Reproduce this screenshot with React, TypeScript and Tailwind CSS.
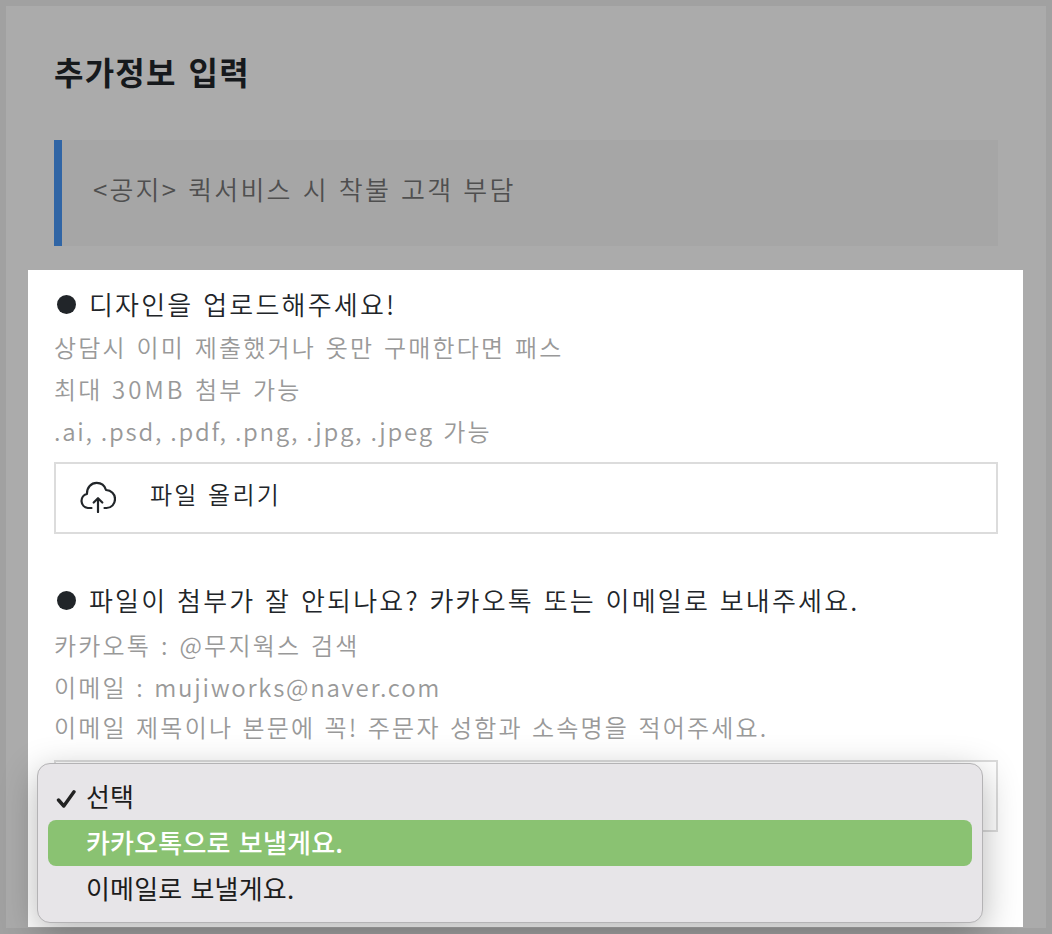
const LATIN = 'tracking-[1.75px] [word-spacing:0px]'

function FieldLabel({ children }: { children: string }) {
  return (
    <h2 className="flex h-11 items-center text-[26px] leading-[44px] font-[350] tracking-[2.2px] whitespace-nowrap text-[#212529] [word-spacing:1.7px]">
      <span className="-mt-[3px] mr-[13px] ml-[3px] size-[19px] shrink-0 rounded-full bg-[#212529]" />
      <span className="-mt-[5px]">{children}</span>
    </h2>
  )
}

function UploadHints() {
  return (
    <div className="-mt-0.5 text-2xl leading-[42px] font-[350] tracking-[2.2px] whitespace-nowrap text-[#999]">
      <p className="h-[42px] leading-[42px] [word-spacing:2.1px]">상담시 이미 제출했거나 옷만 구매한다면 패스</p>
      <p className="h-[42px] leading-[42px] [word-spacing:1.8px]">
        최대 <span className="tracking-[3.1px]">30MB</span> 첨부 가능
      </p>
      <p className="h-[42px] leading-[42px] [word-spacing:1.8px]">
        <span className={LATIN}>.ai, .psd, .pdf, .png, .jpg, .jpeg</span> 가능
      </p>
    </div>
  )
}

function ContactHints() {
  return (
    <div className="text-2xl leading-[42px] font-[350] tracking-[2.2px] whitespace-nowrap text-[#999]">
      <p className="h-[42px] leading-[42px] [word-spacing:2.3px]">카카오톡 : @무지웍스 검색</p>
      <p className="h-[42px] leading-[42px] [word-spacing:1.8px]">
        이메일 : <span className={LATIN}>mujiworks@naver.com</span>
      </p>
      <p className="-mt-0.5 h-[42px] leading-[42px] [word-spacing:1.7px]">
        이메일 제목이나 본문에 꼭! 주문자 성함과 소속명을 적어주세요.
      </p>
    </div>
  )
}

function CloudIcon() {
  return (
    <svg
      className="-mt-0.5 h-8 w-[38px] shrink-0"
      viewBox="0 0 38 32"
      fill="none"
      stroke="#212529"
      strokeWidth="2.2"
      strokeLinecap="round"
      strokeLinejoin="round"
    >
      <path d="M13.5 27H9.8A7.2 7.2 0 0 1 8.9 12.9C8.9 6.5 13 1.9 18.7 1.9C23.2 1.9 26.7 4.7 28 9C33.3 9.2 37 13 37 18C37 23 33.5 27 28.5 27H26.5" />
      <path d="M20 31V17.5M15.7 21.5L20 17.2L24.3 21.5" />
    </svg>
  )
}

const OPTIONS = ['선택', '카카오톡으로 보낼게요.', '이메일로 보낼게요.']

function OptionMenu() {
  return (
    <ul className="absolute top-px -left-[19px] h-[160px] w-[946px] rounded-[13px] border border-[#b4b3b5] bg-[#e7e5e8] px-[10px] pt-[10px] shadow-[0_10px_36px_rgba(0,0,0,0.29)]">
      {OPTIONS.map((option, index) => (
        <li
          key={option}
          className={`flex h-[46px] items-center rounded-lg pl-2 text-[26px] leading-[46px] tracking-[0.2px] [word-spacing:2px] ${
            index === 1 ? 'bg-[#8ac272] font-medium text-white' : 'text-[#1c1c1c]'
          }`}
        >
          <span className="w-[30px]">
            {index === 0 && (
              <svg
                className="mt-[3px] size-5"
                viewBox="0 0 20 20"
                fill="none"
                stroke="#222"
                strokeWidth="3.4"
                strokeLinecap="round"
                strokeLinejoin="round"
              >
                <path d="M2.5 11L7.8 17L18 2.8" />
              </svg>
            )}
          </span>
          <span className="-mt-0.5">{option}</span>
        </li>
      ))}
    </ul>
  )
}

export default function App() {
  return (
    <div className="h-[934px] w-[1052px] overflow-hidden bg-[#a1a1a1] p-1.5 font-['Noto_Sans_CJK_KR',sans-serif]">
      <main className="h-[922px] bg-[#ababab] pt-10">
        <h1 className="ml-12 h-[52px] text-[32px] leading-[51px] font-bold tracking-[1.2px] text-[#16191c] [word-spacing:3.5px]">
          추가정보 입력
        </h1>

        <div className="mt-[42px] ml-12 h-[106px] w-[944px] border-l-8 border-[#3065a5] bg-[#a6a6a6] pl-[31px] text-[26px] leading-[97px] font-[350] tracking-[2.2px] text-[#4f4f4f] [word-spacing:2px]">
          &lt;공지&gt; 퀵서비스 시 착불 고객 부담
        </div>

        <section className="mt-6 ml-[22px] h-[657px] w-[995px] bg-white pt-3.5 pr-[25px] pl-[26px]">
          <FieldLabel>디자인을 업로드해주세요!</FieldLabel>
          <UploadHints />
          <button
            type="button"
            className="mt-2.5 flex h-[72px] w-full items-center border-2 border-[#dcdcdc] pl-[22px] text-2xl font-[350] tracking-[2.2px] text-[#212529] [word-spacing:2px]"
          >
            <CloudIcon />
            <span className="-mt-2 ml-[34px]">파일 올리기</span>
          </button>

          <div className="mt-[46px]">
            <FieldLabel>파일이 첨부가 잘 안되나요? 카카오톡 또는 이메일로 보내주세요.</FieldLabel>
          </div>
          <ContactHints />
          <div className="relative mt-3 h-[72px] border-2 border-[#dcdcdc]">
            <OptionMenu />
          </div>
        </section>
      </main>
    </div>
  )
}
